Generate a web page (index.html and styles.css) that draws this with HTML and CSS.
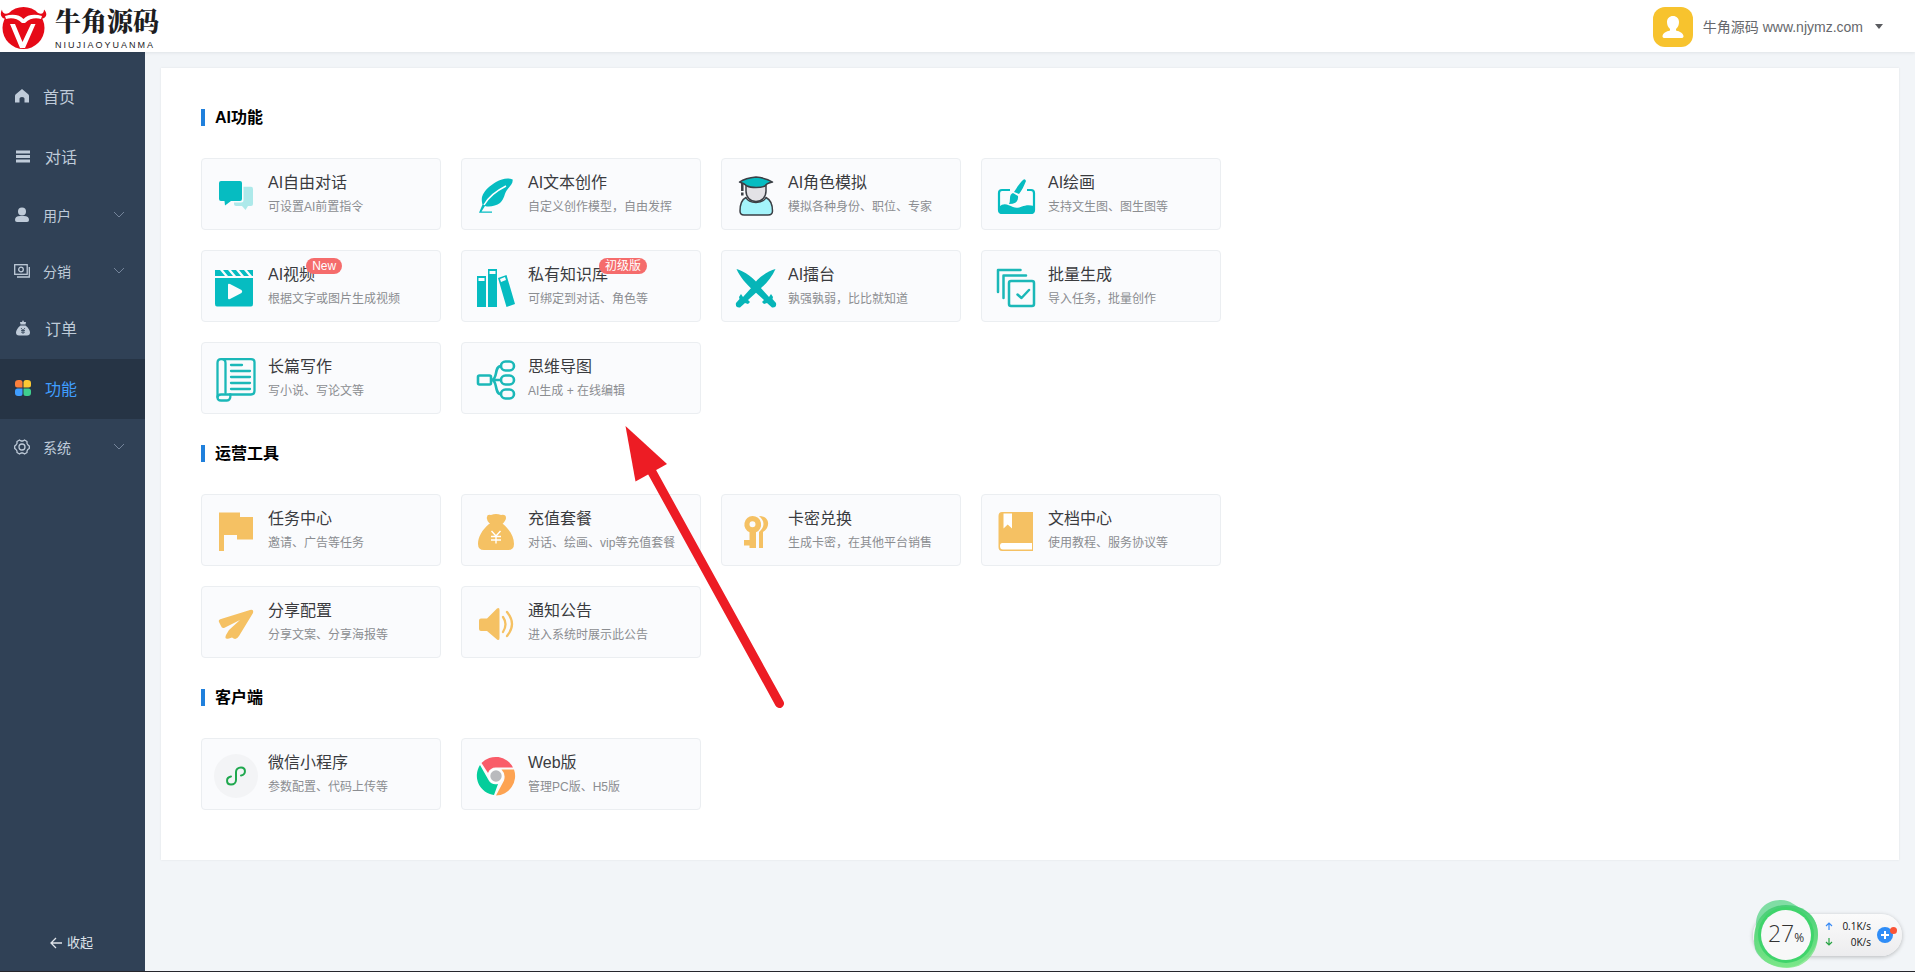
FILE: index.html
```html
<!DOCTYPE html>
<html lang="zh-CN">
<head>
<meta charset="utf-8">
<title>牛角源码</title>
<link rel="stylesheet" href="styles.css">
</head>
<body>
<div class="app">
  <header class="header">
    <a class="logo" href="#">
      <svg class="logo-mark" viewBox="0 0 48 52" aria-hidden="true">
        <circle cx="23.500" cy="28" r="21" fill="#e60a17"/>
        <path d="M2 9.500C2 13 5 15 9 13L7 19C2 19-1 15 2 9.500ZM44 9.500C44 13 42 15 38 13L40 19C45 19 49 15 44 9.500Z" fill="#e60a17"/>
        <path d="M5 16C13 13.500 20 15 23.500 19C27 15 34 13.500 42 16L41 19C36 17.500 30 18 25 23H22C17 18 11 17.500 6 19Z" fill="#fff"/>
        <path d="M10 24H15L22.500 42L31 24H35.500L25 48H20Z" fill="#fff"/>
      </svg>
      <span class="logo-text"><strong class="logo-name">牛角源码</strong><span class="logo-sub">NIUJIAOYUANMA</span></span>
    </a>
    <button class="account" type="button">
      <svg class="avatar" viewBox="0 0 40 40" aria-hidden="true">
        <rect width="40" height="40" rx="12" fill="#f7c32e"/>
        <path d="M20 9C23.500 9 26 11.500 26 15C26 18 25 20 23 22V23.500C27 24.500 30 26 30.500 29C30.500 30.500 30 31 28 31H12C10 31 9.500 30.500 9.500 29C10 26 13 24.500 17 23.500V22C15 20 14 18 14 15C14 11.500 16.500 9 20 9Z" fill="#fff"/>
      </svg>
      <span>牛角源码 www.njymz.com</span>
      <span class="caret"></span>
    </button>
  </header>

  <div class="body">
    <aside class="sidebar">
      <nav class="menu">
        <a class="item item-home" href="#"><svg viewBox="0 0 16 16"><path d="M8 1L14.500 6.500Q15 7 15 8V14.500H10.500V10.500Q10.500 9 8 9T5.500 10.500V14.500H1V8Q1 7 1.500 6.500Z" fill="currentColor"/></svg>首页</a>
        <a class="item" href="#"><svg viewBox="0 0 16 16"><path d="M1 2.500H15V5.500H1ZM1 7H15V10H1ZM1 11.500H15V14.500H1Z" fill="currentColor"/></svg>对话</a>
        <button class="item sub" type="button"><svg viewBox="0 0 16 16"><ellipse cx="8" cy="4.500" rx="4" ry="4" fill="currentColor"/><path d="M1 13Q1 9 6 9H10Q15 9 15 13Q15 15 13 15H3Q1 15 1 13Z" fill="currentColor"/></svg>用户<svg class="chev" viewBox="0 0 12 12"><path d="M1 3L6 8L11 3" fill="none" stroke="currentColor"/></svg></button>
        <button class="item sub" type="button"><svg viewBox="0 0 16 16"><g fill="none" stroke="currentColor" stroke-width="1.300"><rect x=".7" y="1.700" width="12.500" height="9.600"/><circle cx="7" cy="6.500" r="2.300"/><path d="M15.300 4V14H3"/></g></svg>分销<svg class="chev" viewBox="0 0 12 12"><path d="M1 3L6 8L11 3" fill="none" stroke="currentColor"/></svg></button>
        <a class="item" href="#"><svg viewBox="0 0 16 16"><path d="M8 0L9 2L11 2L10.500 4.500H5.500L5 2L7 2ZM5.500 5.500H10.500C13.500 8 15 10.500 15 12.500Q15 15.500 12 15.500H4Q1 15.500 1 12.500C1 10.500 2.500 8 5.500 5.500Z" fill="currentColor"/><path d="M6 8L8 10.300L10 8M8 10V14M6 10.500H10M6 12.200H10" fill="none" stroke="#304156" stroke-width=".8"/></svg>订单</a>
        <a class="item active" href="#" aria-current="page"><svg viewBox="0 0 16 16"><path d="M3.500 0H5Q7.500 0 7.500 2.500V7.500H2.500Q0 7.500 0 5V3Q0 0 3.500 0Z" fill="#fb7f3c"/><path d="M11 0H12.500Q16 0 16 3V5Q16 7.500 13.500 7.500H8.500V2.500Q8.500 0 11 0Z" fill="#fcc934"/><path d="M2.500 8.500H7.500V13.500Q7.500 16 5 16H3Q0 16 0 13V11Q0 8.500 2.500 8.500Z" fill="#409eff"/><path d="M8.500 8.500H13.500Q16 8.500 16 11V13Q16 16 13 16H11Q8.500 16 8.500 13.500Z" fill="#3fcf8e"/></svg>功能</a>
        <button class="item sub" type="button"><svg viewBox="0 0 16 16"><g fill="none" stroke="currentColor" stroke-width="1.300" stroke-linejoin="round"><path d="M5.500 1L7 2H9L10.500 1L13 2.500V4.500L14 6L15.300 7V9.500L13.800 10.500L13 12V13.500L10.500 15L9 14H7L5.500 15L3 13.500V12L2 10.500L.7 9.500V7L2 6L3 4.500V2.500Z"/><circle cx="8" cy="8" r="3"/></g></svg>系统<svg class="chev" viewBox="0 0 12 12"><path d="M1 3L6 8L11 3" fill="none" stroke="currentColor"/></svg></button>
      </nav>
      <button class="collapse" type="button"><svg viewBox="0 0 12 12"><path d="M12 6H1M6 1L1 6L6 11" fill="none" stroke="currentColor" stroke-width="1.300"/></svg>收起</button>
    </aside>

    <main class="content">
      <div class="panel">
        <section class="section">
          <h2 class="title">AI功能</h2>
          <div class="grid">
            <a class="card" href="#">
              <svg class="icon" viewBox="0 0 44 44"><path d="M29.500 12.700H37Q39 12.700 39 15V30Q39 32 37 32H34L31.500 36L28 32H22Q20 32 20 30V28.500H27Q29.500 28.500 29.500 26Z" fill="#ade9ea"/><path d="M7 7H26Q28 7 28 9V25Q28 27 26 27H17L11 31.500L10.500 27H7Q5 27 5 25V9Q5 7 7 7Z" fill="#06bcc1"/></svg>
              <span class="text"><span class="name">AI自由对话</span><span class="desc">可设置AI前置指令</span></span>
            </a>
            <a class="card" href="#">
              <svg class="icon" viewBox="0 0 44 44"><path d="M38.700 5.500C33 3.500 28 5 22 8C17 11 10 16 8 23C7.500 26 8 29 8.500 30.500L5 38.800H18V37.600H7.500L11 32C15 33.500 22 32 26 29C31 24 30 20 33 16C36 12 39 10 38.700 5.500Z" fill="#06bcc1"/><path d="M10 31C15 22 24 16 32 12" fill="none" stroke="#fff" stroke-width="1.500"/></svg>
              <span class="text"><span class="name">AI文本创作</span><span class="desc">自定义创作模型，自由发挥</span></span>
            </a>
            <a class="card" href="#">
              <svg class="icon" viewBox="0 0 44 44"><g stroke="#3b3f45" stroke-width="1.500" stroke-linejoin="round"><path d="M12 10V17C12 23 16 27.500 22 27.500S32 23 32 17V10Z" fill="#e3e2e6"/><path d="M5.500 8C10 5 17 3.500 22 3C27 3.500 34 5 38.500 8C34 9 32 10 31 12C27 14 17 14 13 12C11 10 9 9 5.500 8Z" fill="#06bcc1"/><path d="M12 23.500C7 26 6 32 6 37Q6 41 10 41H34Q38.500 41 38.500 37C38.500 32 37 26 32 23.500C29 30 15 30 12 23.500Z" fill="#a4f4fb"/></g><path d="M8.300 9V17M8.300 18.500V21.500" stroke="#3b3f45" stroke-width="2.500"/></svg>
              <span class="text"><span class="name">AI角色模拟</span><span class="desc">模拟各种身份、职位、专家</span></span>
            </a>
            <a class="card" href="#">
              <svg class="icon" viewBox="0 0 44 44"><path d="M16 16H8Q5 16 5 19V36Q5 39 8 39H37Q40 39 40 36V19Q40 16 37 16H33" fill="none" stroke="#06bcc1" stroke-width="2.200"/><path d="M5 33C10 28 14 31 19 33C26 36 29 29 40 32V37Q40 40 37 40H8Q5 40 5 37Z" fill="#06bcc1"/><path d="M29 6Q31 4 32 7C30 12 28 16 25 20L20 18C23 13 26 9 29 6ZM19 19L24 22Q25 30 15 30Q16 28 16 24Q16 20 19 19Z" fill="#06bcc1"/></svg>
              <span class="text"><span class="name">AI绘画</span><span class="desc">支持文生图、图生图等</span></span>
            </a>
            <a class="card" href="#">
              <svg class="icon" viewBox="0 0 44 44"><path d="M1 4H6L11 10H1ZM9 4H14L19 10H14ZM17 4H22L27 10H22ZM25 4H30L35 10H30ZM33 4H39V10H38ZM1 12H39V38Q39 40.500 37 40.500H3Q1 40.500 1 38ZM14 19V32Q14 34 16 33L27.500 27Q29 25.500 27.500 24L16 18Q14 17 14 19Z" fill="#06bcc1" fill-rule="evenodd"/></svg>
              <span class="text"><span class="name">AI视频<span class="badge">New</span></span><span class="desc">根据文字或图片生成视频</span></span>
            </a>
            <a class="card" href="#">
              <svg class="icon" viewBox="0 0 44 44"><path d="M3 10H12V41H3ZM4.500 12V15H10.500V12ZM14 3H23V41H14ZM15.500 5V8H21.500V5ZM24 12L32.500 9L41 38L32.500 41ZM26 13L27 16L32 14L31 11Z" fill="#06bcc1" fill-rule="evenodd"/></svg>
              <span class="text"><span class="name">私有知识库<span class="badge">初级版</span></span><span class="desc">可绑定到对话、角色等</span></span>
            </a>
            <a class="card" href="#">
              <svg class="icon" viewBox="0 0 44 44"><path d="M2.500 3C10 5 21 12 26 21L35 31L37 28L39 31L38.500 33L42 37Q43 42 38 41.500L33 37L30 38L28 36L30 34L19 24C12 18 6 11 2.500 3Z" fill="#06b5b8"/><path d="M41.500 3C34 5 23 12 18 21L9 31L7 28L5 31L5.500 33L2 37Q1 42 6 41.500L11 37L14 38L16 36L14 34L25 24C32 18 38 11 41.500 3Z" fill="#06b5b8"/></svg>
              <span class="text"><span class="name">AI擂台</span><span class="desc">孰强孰弱，比比就知道</span></span>
            </a>
            <a class="card" href="#">
              <svg class="icon" viewBox="0 0 44 44"><g fill="none" stroke="#1bb8b8" stroke-width="2.500" stroke-linecap="round" stroke-linejoin="round"><path d="M4 26V4H26.500M9.500 32V9.500H32"/><rect x="15" y="15" width="25" height="25" rx="2"/><path d="M23.500 28.500L27.500 32L35 24"/></g></svg>
              <span class="text"><span class="name">批量生成</span><span class="desc">导入任务，批量创作</span></span>
            </a>
            <a class="card" href="#">
              <svg class="icon" viewBox="0 0 44 44"><g fill="none" stroke="#1bb8b8" stroke-width="2.300" stroke-linecap="round"><path d="M16 36.500H37Q40.500 36.500 40.500 33V4Q40.500 1.200 37 1.200H7Q3.500 1.200 3.500 5V39M11.500 35V5Q11.500 1.200 7.500 1.200"/><path d="M16 36.500H7Q3.500 36.500 3.500 39.500T7 42.500H13Q16.500 42.500 16.500 36.500"/><path d="M17 7H28M17 13H36M17 19H36M17 25H36M17 31H36"/></g></svg>
              <span class="text"><span class="name">长篇写作</span><span class="desc">写小说、写论文等</span></span>
            </a>
            <a class="card" href="#">
              <svg class="icon" viewBox="0 0 44 44"><g fill="none" stroke="#1bb8b8" stroke-width="2.600"><rect x="4" y="17.500" width="13" height="9" rx="1.500"/><rect x="27" y="3.500" width="13" height="9" rx="4.500"/><rect x="27" y="17.500" width="13" height="9" rx="4.500"/><rect x="27" y="31.500" width="13" height="9" rx="4.500"/><path d="M17 22H27M27 8C20 8 24 21 18 22C24 23 20 36 27 36"/></g></svg>
              <span class="text"><span class="name">思维导图</span><span class="desc">AI生成 + 在线编辑</span></span>
            </a>
          </div>
        </section>

        <section class="section">
          <h2 class="title">运营工具</h2>
          <div class="grid">
            <a class="card" href="#">
              <svg class="icon" viewBox="0 0 44 44"><path d="M5 2.500H26V7H39V29.500H23V25H10V41H5Z" fill="#f5c163"/></svg>
              <span class="text"><span class="name">任务中心</span><span class="desc">邀请、广告等任务</span></span>
            </a>
            <a class="card" href="#">
              <svg class="icon" viewBox="0 0 44 44"><path d="M13 7Q13 4 17 5Q22 3 27 5Q32 4 32 8Q32 10 28.500 14H16Q12 10 13 7ZM15 14H29C36 20 40 27 40 34Q40 40 34 40H10Q4 40 4 34C4 27 8 20 15 14Z" fill="#f5c163"/><path d="M17.500 21L22 26L26.500 21M22 26V33.500M17 26.500H27M17 30H27" fill="none" stroke="#fff" stroke-width="1.400"/></svg>
              <span class="text"><span class="name">充值套餐</span><span class="desc">对话、绘画、vip等充值套餐</span></span>
            </a>
            <a class="card" href="#">
              <svg class="icon" viewBox="0 0 44 44"><path d="M18.500 6A8.500 8.500 0 0 1 22 22.300V38H15.500V35.500H10V30H15.500V22.300A8.500 8.500 0 0 1 18.500 6ZM18.500 11.300A3 3 0 1 0 18.500 17.300A3 3 0 0 0 18.500 11.300Z" fill="#f5c163"/><path d="M25 6C33 6 36 12 33 18C32 20 30 21 29 22V38H25V22C31 17 31 11 25 6Z" fill="#f5c163"/></svg>
              <span class="text"><span class="name">卡密兑换</span><span class="desc">生成卡密，在其他平台销售</span></span>
            </a>
            <a class="card" href="#">
              <svg class="icon" viewBox="0 0 44 44"><path d="M8 2H39V41H8Q4.500 41 4.500 37V6Q4.500 2 8 2Z" fill="#f5c163"/><path d="M9.500 3.500H18V18.500L13.700 14.500L9.500 18.500ZM9 33H38V39.500H9Q6 39.500 6 36T9 33Z" fill="#fff"/></svg>
              <span class="text"><span class="name">文档中心</span><span class="desc">使用教程、服务协议等</span></span>
            </a>
            <a class="card" href="#">
              <svg class="icon" viewBox="0 0 44 44"><path d="M36 8Q40 7 39 11L25 34Q22 39 18 35.500L15 36.500Q10 38 12 33L15 28L26 18L11 25.500Q8 27 7 24L5 20Q4 18 7 17Z" fill="#f5c163"/></svg>
              <span class="text"><span class="name">分享配置</span><span class="desc">分享文案、分享海报等</span></span>
            </a>
            <a class="card" href="#">
              <svg class="icon" viewBox="0 0 44 44"><path d="M7 16.500H13L23 6.500Q25.500 5 25.500 8V36Q25.500 39 23 37.500L13 29H7Q5 29 5 27V18.500Q5 16.500 7 16.500Z" fill="#f5c163"/><path d="M29 15Q34 22 29 30M33 10Q43 22 33 34" fill="none" stroke="#f5c163" stroke-width="2.300" stroke-linecap="round"/></svg>
              <span class="text"><span class="name">通知公告</span><span class="desc">进入系统时展示此公告</span></span>
            </a>
          </div>
        </section>

        <section class="section">
          <h2 class="title">客户端</h2>
          <div class="grid">
            <a class="card" href="#">
              <svg class="icon" viewBox="0 0 44 44"><circle cx="22" cy="22" r="22" fill="#f3f4f6"/><path d="M17 22.500C11.500 23.500 12 30.500 17 30.500C20 30.500 22 28.500 22 26V18C22 15.500 24 13.500 27 13.500C32 13.500 32.500 20.500 27 21.500" fill="none" stroke="#1fa84e" stroke-width="2" stroke-linecap="round"/></svg>
              <span class="text"><span class="name">微信小程序</span><span class="desc">参数配置、代码上传等</span></span>
            </a>
            <a class="card" href="#">
              <svg class="icon" viewBox="0 0 44 44"><path d="M7.500 9A19.500 19.500 0 0 1 39 13.500H22A8.500 8.500 0 0 0 14 19Z" fill="#f95c69"/><path d="M6 11L14.500 26A8.500 8.500 0 0 0 24 30L20 41A19.500 19.500 0 0 1 6 11Z" fill="#04cd9b"/><path d="M40 15.500A19.500 19.500 0 0 1 22 41.500L30 26.500Q32 20 27.500 15.500Z" fill="#fda352"/><circle cx="22" cy="22" r="7.500" fill="#fff"/><circle cx="22" cy="22" r="5.700" fill="#b9babd"/></svg>
              <span class="text"><span class="name">Web版</span><span class="desc">管理PC版、H5版</span></span>
            </a>
          </div>
        </section>
      </div>
    </main>
  </div>

  <svg class="pointer" viewBox="620 420 170 295" aria-hidden="true"><path d="M652 472L779.500 703.500" stroke="#ed1c24" stroke-width="9" stroke-linecap="round"/><path d="M625.500 426L667 464L635.500 481.500Z" fill="#ed1c24"/></svg>

  <div class="monitor">
    <div class="gauge">
      <svg viewBox="0 0 66 70" aria-hidden="true"><defs><linearGradient id="ring" x1="0" y1="0" x2="0" y2="1"><stop offset="0" stop-color="#35c968"/><stop offset="1" stop-color="#7aea80"/></linearGradient></defs><path d="M28 1C38 1 42 7 49 10C60 15 65 24 65 36C64 50 55 60 45 66C30 72 8 66 2 50C0 38 3 33 3 24C4 10 14 1 28 1Z" fill="#42cf76" opacity=".65"/><path d="M33 6C52 6 65 18 65 36C65 54 52 69 34 69C15 69 1 56 1 40C1 20 14 6 33 6Z" fill="url(#ring)" opacity=".75"/><circle cx="33" cy="36" r="28" fill="#3fd46b"/><circle cx="33" cy="36" r="25" fill="#f7f8f8"/></svg>
      <span class="load">27<small>%</small></span>
    </div>
    <dl class="rates">
      <div><dt><svg viewBox="0 0 8 8"><path d="M4 8V1M1 4L4 1L7 4" fill="none" stroke="#3a8bf5" stroke-width="1.200"/></svg></dt><dd>0.1K/s</dd></div>
      <div><dt><svg viewBox="0 0 8 8"><path d="M4 0V7M1 4L4 7L7 4" fill="none" stroke="#27a343" stroke-width="1.200"/></svg></dt><dd>0K/s</dd></div>
    </dl>
    <button class="boost" type="button" aria-label="加速"><svg viewBox="0 0 20 18"><circle cx="8" cy="9" r="8" fill="#2f8df7"/><path d="M8 5V13M4 9H12" stroke="#fff" stroke-width="2"/><circle cx="16.500" cy="4.500" r="3.500" fill="#fa5436"/></svg></button>
  </div>
</div>
</body>
</html>
```
FILE: styles.css
```css
* { box-sizing: border-box; }

body {
  margin: 0;
  font-family: "Liberation Sans", "Noto Sans CJK SC", sans-serif;
  font-size: 14px;
  color: #303133;
}

a { color: inherit; text-decoration: none; }

button {
  margin: 0;
  border: 0;
  padding: 0;
  background: none;
  font: inherit;
  color: inherit;
  cursor: pointer;
}

.app {
  position: relative;
  display: flex;
  flex-direction: column;
  min-height: 100vh;
  background: #f2f5f8;
  border-bottom: 1px solid #25262c;
}

.header {
  display: flex;
  justify-content: space-between;
  align-items: center;
  height: 52px;
  padding-right: 32px;
  background: #fff;
  box-shadow: 0 1px 3px rgba(0, 21, 41, 0.08);
  z-index: 1;
}

.logo { display: flex; align-items: center; gap: 7px; }
.logo-mark { width: 48px; height: 52px; }
.logo-text { display: flex; flex-direction: column; padding-top: 4px; color: #1d1d1f; }
.logo-name {
  font-family: "Liberation Serif", "Noto Serif CJK SC", "Noto Sans CJK SC", serif;
  font-size: 26px;
  line-height: 34px;
  font-weight: 900;
}
.logo-sub { font-size: 9px; line-height: 10px; letter-spacing: 2px; }

.account { display: flex; align-items: center; gap: 10px; color: #66686c; }
.avatar { width: 40px; height: 40px; margin-top: 2px; }
.caret {
  margin-left: 2px;
  border: 4px solid transparent;
  border-top: 5px solid #5a5c60;
  border-bottom: 0;
}

.body { display: flex; flex: 1; }

.sidebar {
  display: flex;
  flex-direction: column;
  justify-content: space-between;
  flex: 0 0 145px;
  padding: 15px 0;
  background: #304156;
  color: #bfcbd9;
}
.menu { display: flex; flex-direction: column; }
.item {
  display: flex;
  align-items: center;
  gap: 14px;
  height: 60px;
  padding: 0 20px 3px 15px;
  font-size: 16px;
}
.item svg { flex: none; width: 16px; height: 16px; }
.item-home { padding-left: 14px; gap: 13px; }
.item.sub { height: 56px; padding: 0 20px 0 14px; gap: 13px; font-size: 14px; }
.item .chev { width: 12px; height: 12px; margin-left: auto; color: #74849a; }
.item.active { background: #263445; color: #409eff; }

.collapse {
  display: flex;
  align-items: center;
  align-self: center;
  gap: 5px;
  padding-right: 2px;
  font-size: 13px;
  line-height: 26px;
  color: #dfe4ea;
}
.collapse svg { width: 12px; height: 12px; }

.content { flex: 1; min-width: 0; padding: 16px; }
.panel {
  padding: 41px 40px 50px;
  background: #fff;
  box-shadow: 0 0 2px rgba(0, 0, 0, 0.08);
}
.section + .section { margin-top: 31px; }
.title {
  margin: 0 0 32px;
  border-left: 4px solid #2080dc;
  padding-left: 10px;
  font-size: 16px;
  line-height: 17px;
  font-weight: 700;
  color: #000;
}
.grid {
  display: grid;
  grid-template-columns: repeat(auto-fill, 240px);
  gap: 20px;
  max-width: 1020px;
}
.card {
  display: flex;
  align-items: flex-end;
  gap: 10px;
  padding: 11px 12px;
  border: 1px solid #ebeef1;
  border-radius: 4px;
  background: #fafbfd;
}
.icon { flex: none; width: 44px; height: 44px; }
.text { display: flex; flex-direction: column; align-items: flex-start; white-space: nowrap; }
.name { position: relative; font-size: 16px; line-height: 26px; color: #3a3b3f; }
.desc { font-size: 12px; line-height: 22px; color: #8b8d91; }
.badge {
  position: absolute;
  top: -4px;
  left: calc(100% - 9px);
  padding: 0 6px;
  border-radius: 8px;
  background: #f56c6c;
  color: #fff;
  font-size: 12px;
  line-height: 16px;
}

.pointer {
  position: absolute;
  left: 620px;
  top: 420px;
  width: 170px;
  height: 295px;
  pointer-events: none;
  z-index: 2;
}

.monitor {
  position: absolute;
  right: 13px;
  bottom: 15px;
  display: flex;
  align-items: center;
  gap: 6px;
  height: 42px;
  padding-right: 5px;
  border-radius: 21px;
  background: linear-gradient(#fbfbfb, #ececee);
  box-shadow: 0 1px 4px rgba(0, 0, 0, 0.25);
  color: #111;
  z-index: 2;
}
.gauge { position: relative; width: 66px; height: 70px; margin-bottom: 2px; }
.gauge svg { display: block; width: 66px; height: 70px; }
.load {
  position: absolute;
  inset: 0;
  font-family: "Open Sans", "Noto Sans", sans-serif;
  font-size: 23px;
  line-height: 68px;
  font-weight: 300;
  text-align: center;
  color: #333;
}
.load small { font-size: 12px; font-weight: 400; }
.rates { margin: 0; padding-bottom: 2px; font-family: "Open Sans", "Noto Sans", sans-serif; font-size: 10px; line-height: 16px; }
.rates div { display: flex; align-items: center; justify-content: space-between; width: 46px; }
.rates dt { display: flex; }
.rates dd { margin: 0; }
.rates svg { width: 8px; height: 8px; }
.boost svg { display: block; width: 20px; height: 18px; }
```
